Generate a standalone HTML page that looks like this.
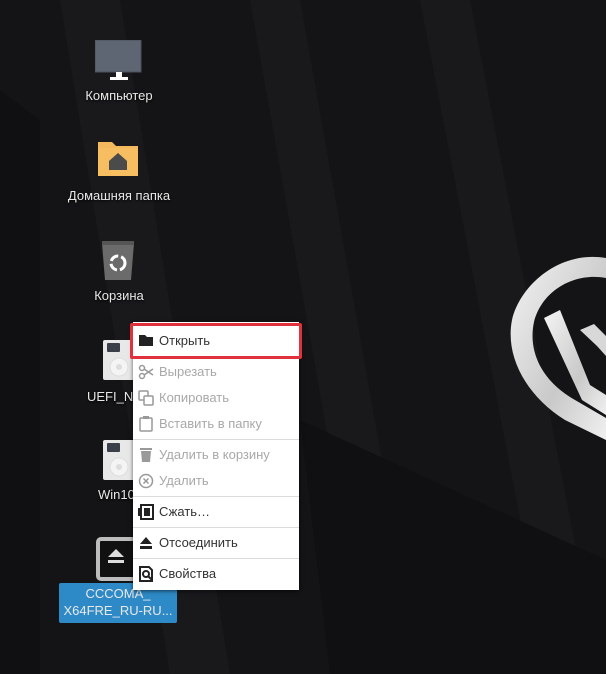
<!DOCTYPE html>
<html><head><meta charset="utf-8"><style>
body{margin:0;width:606px;height:674px;overflow:hidden;background:#141416;font-family:"Liberation Sans","DejaVu Sans",sans-serif;position:relative}
.bg{position:absolute;inset:0}
.lbl{position:absolute;color:#e8e8e8;font-size:13px;text-align:center;text-shadow:0 1px 2px #000;white-space:nowrap}
.menu{position:absolute;left:133px;top:322px;width:166px;height:268px;background:#fff;box-shadow:0 1px 4px rgba(0,0,0,.6)}
.it{position:absolute;left:0;width:166px;height:26px;font-size:13px;line-height:26px;color:#333}
.it span{position:absolute;left:26px}
.dis{color:#a8a8a8}
.sep{position:absolute;left:0;width:166px;height:1px;background:#dcdcdc}
.ic{position:absolute;left:5px;top:5px}
</style></head><body>
<svg class="bg" width="606" height="674">
<defs><linearGradient id="g" x1="0" y1="0" x2="1" y2="1"><stop offset="0" stop-color="#f4f4f4"/><stop offset=".6" stop-color="#c9c9c9"/><stop offset="1" stop-color="#f0f0f0"/></linearGradient></defs>
<g fill="#19191c">
<polygon points="60,0 120,0 230,674 170,674"/>
<polygon points="250,0 300,0 420,674 370,674"/>
<polygon points="420,0 470,0 600,674 550,674"/>
</g>
<g fill="#101012">
<polygon points="0,90 40,120 40,674 0,674"/>
<polygon points="300,420 606,560 606,674 330,674"/>
</g>
<path d="M606,258 C560,250 520,285 512,320 C505,355 525,395 565,420 L606,440 L606,418 L575,400 C540,380 528,350 534,322 C542,290 575,272 606,278 Z" fill="url(#g)"/>
<path d="M544,318 L560,310 L590,385 L606,395 L606,415 L582,400 Z" fill="url(#g)"/>
<path d="M580,330 L594,324 L606,336 L606,356 L597,346 Z" fill="#d8d8d8"/>
</svg>
<svg style="position:absolute;left:95px;top:40px" width="48" height="42"><rect x="0" y="0" width="46" height="32" fill="#5f6673" stroke="#4b515b"/><rect x="21" y="32" width="6" height="5" fill="#fff"/><rect x="15" y="37" width="18" height="3" fill="#fff"/></svg>
<div class="lbl" style="left:60px;width:118px;top:88px">Компьютер</div>
<svg style="position:absolute;left:97px;top:140px" width="42" height="38"><path d="M1,2 h14 l4,4 h22 v30 h-40z" fill="#f4b95c"/><rect x="1" y="8" width="40" height="28" fill="#f6be61"/><path d="M12,30 v-9 l9,-8 9,8 v9z" fill="#4b4b4b"/></svg>
<div class="lbl" style="left:50px;width:138px;top:188px">Домашняя папка</div>
<svg style="position:absolute;left:99px;top:240px" width="38" height="42"><path d="M3,3 h32 l-3,37 h-26z" fill="#6b6b6b"/><rect x="3" y="1" width="32" height="4" fill="#555"/><circle cx="19" cy="23" r="7" fill="none" stroke="#fff" stroke-width="3" stroke-dasharray="9 3"/></svg>
<div class="lbl" style="left:60px;width:118px;top:288px">Корзина</div>
<svg style="position:absolute;left:103px;top:340px" width="32" height="40"><rect width="32" height="40" rx="2" fill="#e8e8e8"/><rect x="4" y="3" width="13" height="9" rx="1" fill="#3a3f4a"/><circle cx="16" cy="27" r="9" fill="#f4f4f4" stroke="#ddd"/><circle cx="16" cy="27" r="3" fill="#ddd"/></svg>
<div class="lbl" style="left:87px;top:389px">UEFI_NT</div>
<svg style="position:absolute;left:103px;top:440px" width="32" height="40"><rect width="32" height="40" rx="2" fill="#e8e8e8"/><rect x="4" y="3" width="13" height="9" rx="1" fill="#3a3f4a"/><circle cx="16" cy="27" r="9" fill="#f4f4f4" stroke="#ddd"/><circle cx="16" cy="27" r="3" fill="#ddd"/></svg>
<div class="lbl" style="left:98px;top:487px">Win10</div>
<svg style="position:absolute;left:96px;top:537px" width="44" height="44"><rect x="2" y="2" width="40" height="40" rx="3" fill="#111" stroke="#bdbdbd" stroke-width="4"/><path d="M12,20 l8,-8 8,8z M12,23 h16 v3 h-16z" fill="#ddd"/></svg>
<div style="position:absolute;left:59px;top:583px;width:118px;height:40px;background:#2e8ac6;border-radius:2px"></div>
<div class="lbl" style="left:59px;width:118px;top:585px;line-height:17px;text-shadow:none">CCCOMA_<br>X64FRE_RU-RU...</div>
<div class="menu">
<div class="it" style="top:6px"><svg class="ic" width="16" height="14"><path d="M1,2h6l2,2h6v9h-14z" fill="#222"/></svg><span>Открыть</span></div>
<div style="position:absolute;left:-3px;top:1px;width:166px;height:30px;border:3px solid #e0323c;border-radius:2px"></div>
<div class="it dis" style="top:37px"><svg class="ic" width="16" height="16"><circle cx="4" cy="4" r="2.5" fill="none" stroke="#999" stroke-width="1.5"/><circle cx="4" cy="12" r="2.5" fill="none" stroke="#999" stroke-width="1.5"/><path d="M6,5 L15,11 M6,11 L15,5" stroke="#999" stroke-width="1.5"/></svg><span>Вырезать</span></div>
<div class="it dis" style="top:63px"><svg class="ic" width="16" height="16"><rect x="1" y="1" width="9" height="9" rx="1" fill="none" stroke="#999" stroke-width="1.5"/><rect x="6" y="6" width="9" height="9" rx="1" fill="#fff" stroke="#999" stroke-width="1.5"/></svg><span>Копировать</span></div>
<div class="it dis" style="top:89px"><svg class="ic" width="16" height="16"><rect x="2" y="2" width="12" height="13" rx="1" fill="none" stroke="#999" stroke-width="1.5"/><rect x="5" y="0" width="6" height="3" fill="#999"/></svg><span>Вставить в папку</span></div>
<div class="sep" style="top:117px"></div>
<div class="it dis" style="top:120px"><svg class="ic" width="16" height="16"><rect x="2" y="1" width="12" height="2" fill="#999"/><path d="M3,4h10l-1,11h-8z" fill="#999"/></svg><span>Удалить в корзину</span></div>
<div class="it dis" style="top:146px"><svg class="ic" width="16" height="16"><circle cx="8" cy="8" r="6.5" fill="none" stroke="#999" stroke-width="1.5"/><path d="M5.5,5.5l5,5M10.5,5.5l-5,5" stroke="#999" stroke-width="1.5"/></svg><span>Удалить</span></div>
<div class="sep" style="top:174px"></div>
<div class="it" style="top:177px"><svg class="ic" width="16" height="16"><rect x="3" y="1" width="12" height="14" fill="none" stroke="#222" stroke-width="2"/><rect x="6" y="4" width="6" height="8" fill="#222"/><rect x="0" y="4" width="2" height="8" fill="#222"/></svg><span>Сжать…</span></div>
<div class="sep" style="top:205px"></div>
<div class="it" style="top:208px"><svg class="ic" width="16" height="16"><path d="M2,9l6,-7 6,7z M2,11h12v3h-12z" fill="#222"/></svg><span>Отсоединить</span></div>
<div class="sep" style="top:236px"></div>
<div class="it" style="top:239px"><svg class="ic" width="16" height="16"><path d="M2,1h9l3,3v11h-12z" fill="none" stroke="#222" stroke-width="2"/><circle cx="8" cy="8" r="3" fill="none" stroke="#222" stroke-width="2"/><path d="M10,10l4,4" stroke="#222" stroke-width="2"/></svg><span>Свойства</span></div>
</div>
</body></html>
